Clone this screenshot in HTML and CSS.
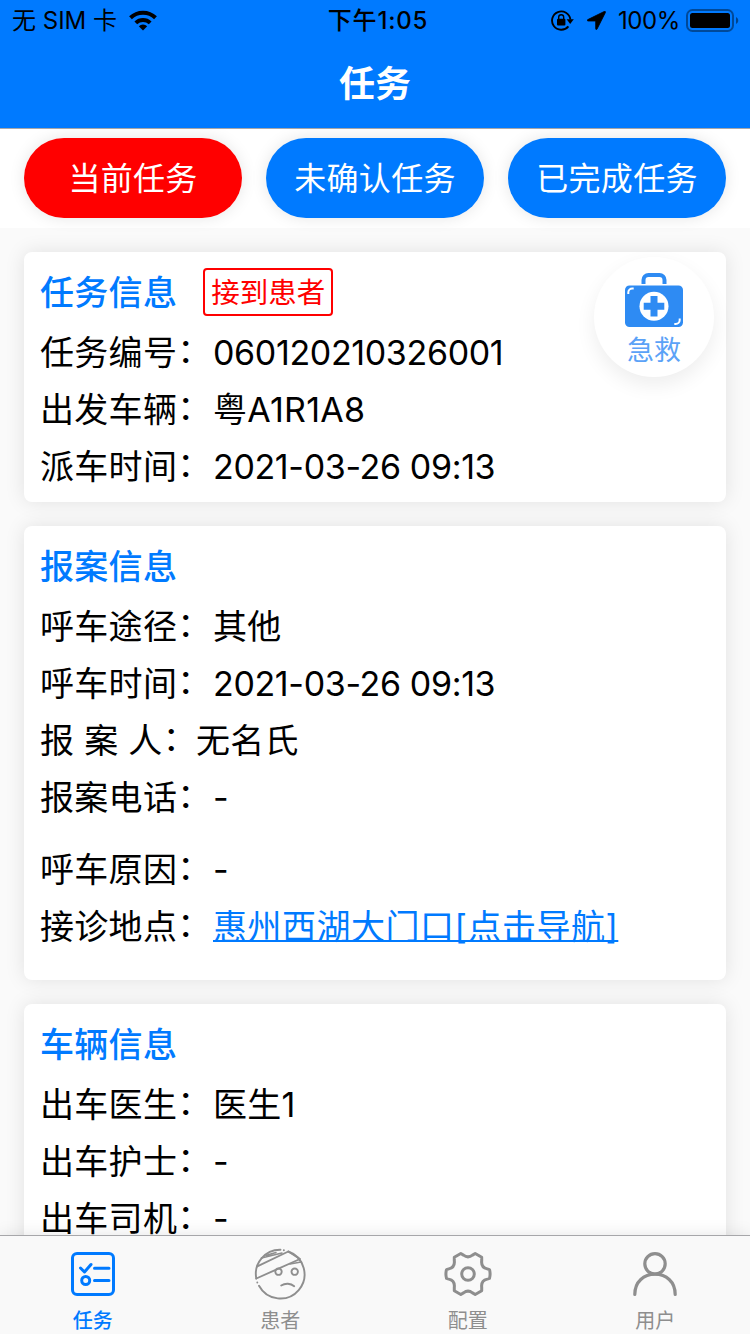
FILE: index.html
```html
<!DOCTYPE html>
<html lang="zh-CN">
<head>
    <meta charset="UTF-8">
    <meta name="viewport" content="width=device-width, initial-scale=1.0">
    <title>任务</title>
    <link rel="stylesheet" href="styles.css">
</head>
<body>

    <header class="header">
        <!-- 状态栏 -->
        <div class="status-bar">
            <div class="status-left">
                <span class="carrier">无 SIM 卡</span>
                <svg class="wifi" width="28" height="21" viewBox="0 0 28 21" fill="none" stroke="#000" stroke-width="4">
                    <path d="M1.5 7.8a18 18 0 0 1 25 0" />
                    <path d="M6.8 12.9a10.5 10.5 0 0 1 14.4 0" />
                    <path d="M14 20.5l-4.2-4.2a6 6 0 0 1 8.4 0z" fill="#000" stroke="none" />
                </svg>
            </div>
            <span class="time">下午1:05</span>
            <div class="status-right">
                <svg class="lock" width="23" height="21" viewBox="0 0 23 21">
                    <path d="M17.4 16.4A9.2 9.2 0 1 1 19.4 9.5" fill="none" stroke="#000" stroke-width="1.9" />
                    <path d="M15.6 9.3h7.2l-3.6 4.6z" />
                    <rect x="6" y="8.7" width="8.4" height="6.8" rx="1" />
                    <path d="M7.7 9V7.2a2.5 2.5 0 0 1 5 0V9" fill="none" stroke="#000" stroke-width="1.4" />
                </svg>
                <svg class="location" width="19" height="19" viewBox="0 0 19 19">
                    <path d="M17.2.5L.8 8.6c-1 .5-.7 1.4.3 1.4h7.6v7.7c0 1.1 1 1.2 1.4.3L18.4 1.5c.4-.9-.4-1.4-1.2-1z" stroke="#000" stroke-width=".8" />
                </svg>
                <span class="percent">100%</span>
                <svg class="battery" width="53" height="23" viewBox="0 0 53 23">
                    <rect x="1" y="1" width="46" height="21" rx="5.5" fill="none" stroke="#000" stroke-opacity=".4" stroke-width="2" />
                    <rect x="4" y="4" width="40" height="15" rx="2.5" />
                    <path d="M50 8c3 1.5 3 5.5 0 7z" fill-opacity=".45" />
                </svg>
            </div>
        </div>
        <h1>任务</h1>
    </header>

    <!-- 任务筛选 -->
    <div class="filters">
        <button class="filter active">当前任务</button>
        <button class="filter">未确认任务</button>
        <button class="filter">已完成任务</button>
    </div>

    <main class="content">
        <section class="card">
            <div class="card-title">
                <h2>任务信息</h2>
                <span class="tag">接到患者</span>
            </div>
            <p class="row"><span class="label">任务编号<span class="colon">：</span></span><span class="number">060120210326001</span></p>
            <p class="row"><span class="label">出发车辆<span class="colon">：</span></span><span>粤A1R1A8</span></p>
            <p class="row"><span class="label">派车时间<span class="colon">：</span></span><span class="number">2021-03-26 09:13</span></p>

            <!-- 急救按钮 -->
            <div class="aid">
                <svg width="58" height="54" viewBox="0 0 58 54">
                    <path d="M18.5 11V7a5 5 0 0 1 5-5h11a5 5 0 0 1 5 5v4" fill="none" stroke="#2e8bf3" stroke-width="4" />
                    <rect x="0" y="12.5" width="58" height="41.5" rx="4.5" fill="#2e8bf3" />
                    <circle cx="29" cy="33.3" r="14.5" fill="#fff" />
                    <path d="M29 23v20.6M18.7 33.3h20.6" stroke="#2e8bf3" stroke-width="7" />
                    <path d="M3.3 21v-1.5a4 4 0 0 1 4-4h1.4M54.7 45.5V47a4 4 0 0 1-4 4h-1.4" fill="none" stroke="#fff" stroke-width="2" />
                </svg>
                <span>急救</span>
            </div>
        </section>

        <section class="card">
            <div class="card-title">
                <h2>报案信息</h2>
            </div>
            <p class="row"><span class="label">呼车途径<span class="colon">：</span></span><span>其他</span></p>
            <p class="row"><span class="label">呼车时间<span class="colon">：</span></span><span class="number">2021-03-26 09:13</span></p>
            <p class="row"><span class="label short">报 案 人<span class="colon">：</span></span><span>无名氏</span></p>
            <p class="row phone"><span class="label">报案电话<span class="colon">：</span></span><span>-</span></p>
            <p class="row"><span class="label">呼车原因<span class="colon">：</span></span><span>-</span></p>
            <p class="row last"><span class="label">接诊地点<span class="colon">：</span></span><a class="link" href="#">惠州西湖大门口[点击导航]</a></p>
        </section>

        <section class="card">
            <div class="card-title">
                <h2>车辆信息</h2>
            </div>
            <p class="row"><span class="label">出车医生<span class="colon">：</span></span><span>医生1</span></p>
            <p class="row"><span class="label">出车护士<span class="colon">：</span></span><span>-</span></p>
            <p class="row"><span class="label">出车司机<span class="colon">：</span></span><span>-</span></p>
        </section>
    </main>

    <!-- 底部导航 -->
    <nav class="tabbar">
        <a class="tab active" href="#">
            <svg width="52" height="52" viewBox="0 0 52 52" stroke-width="3">
                <rect x="5.5" y="5.5" width="41" height="41" rx="4.5" />
                <path d="M13.5 20l4 4 6.5-7.5M27.5 20.2H42M27.5 32.5H42" />
                <circle cx="18.7" cy="32.5" r="4" />
            </svg>
            <span>任务</span>
        </a>
        <a class="tab" href="#">
            <svg width="52" height="52" viewBox="0 0 52 52" stroke-width="1.9">
                <path d="M2.3 30.5A24.2 24.2 0 0 1 26.5 1.7M34.3 3.5A24.2 24.2 0 1 1 5 37.8" />
                <path d="M3.3 18.3L34.3 3.5L46 11L2.3 30.5" />
                <path d="M7.5 10L28 5M12.5 7.3L22 4.5M36 16l11-2" stroke-width="1.5" />
                <path d="M3.3 34.5v.1M29.8 2.2h.1" />
                <circle cx="24.5" cy="23.7" r="3.2" />
                <circle cx="40.7" cy="23.7" r="3.2" />
                <path d="M27.2 37.5c4-2.500 9.500-2.300 13 .7" />
            </svg>
            <span>患者</span>
        </a>
        <a class="tab" href="#">
            <svg width="52" height="52" viewBox="0 0 52 52" stroke-width="3">
                <path d="M18.8 5.5l2.7 1.6q4.5 3.5 9 0l2.7-1.6 6.5 3.7v3.5q-.8 6.8 5.5 8.2l2.3.8q1.2 4.3 0 8.6l-2.3.8q-6.3 1.4-5.5 8.2v3.5l-6.5 3.7-2.7-1.6q-4.5-3.5-9 0l-2.7 1.6-6.5-3.7v-3.5q.8-6.8-5.5-8.2l-2.3-.8q-1.2-4.3 0-8.6l2.3-.8q6.3-1.4 5.5-8.2v-3.5z" />
                <circle cx="26" cy="26" r="6.3" />
            </svg>
            <span>配置</span>
        </a>
        <a class="tab" href="#">
            <svg width="52" height="52" viewBox="0 0 52 52" stroke-width="3.2">
                <circle cx="26" cy="15.8" r="10.2" />
                <path d="M5.8 46.5C5.8 33.5 15 26.2 26 26.2s20.2 7.3 20.2 20.3" />
            </svg>
            <span>用户</span>
        </a>
    </nav>

</body>
</html>
```

FILE: styles.css
```css
* {
    box-sizing: border-box;
}

body {
    margin: 0;
    height: 1334px;
    display: flex;
    flex-direction: column;
    overflow: hidden;
    font-family: Inter, "Noto Sans CJK SC", sans-serif;
    background-color: #fafafa;
    color: #000;
}

h1, h2, p {
    margin: 0;
}

.header {
    flex: none;
    height: 129px;
    background-color: #007aff;
    border-bottom: 1px solid #a7a7aa;
}

.status-bar {
    display: grid;
    grid-template-columns: 1fr auto 1fr;
    align-items: center;
    height: 41px;
    padding: 0 11px 0 12px;
    font-size: 24px;
    line-height: 42px;
}

.status-left, .status-right {
    display: flex;
    align-items: center;
}

.status-right {
    justify-content: flex-end;
}

.wifi {
    margin-left: 12px;
    margin-bottom: 2px;
}

.time {
    padding-left: 5px;
    font-weight: 500;
    letter-spacing: 0.8px;
}

.lock {
    margin-bottom: 2px;
}

.location {
    margin: 0 12px 1px 13px;
}

.percent {
    letter-spacing: -0.4px;
}

.battery {
    margin-left: 6px;
    margin-bottom: 1px;
}

.header h1 {
    color: #fff;
    font-size: 36px;
    font-weight: 600;
    line-height: 86px;
    text-align: center;
}

.filters {
    flex: none;
    display: flex;
    gap: 24px;
    height: 99px;
    padding: 9px 24px 10px;
    background-color: #fff;
}

.filter {
    flex: 1;
    padding: 0 0 4px;
    border: none;
    border-radius: 40px;
    background-color: #007aff;
    color: #fff;
    font-family: inherit;
    font-size: 32px;
    font-weight: 400;
    letter-spacing: 0.3px;
    box-shadow: 0 0 16px rgba(0, 0, 0, 0.1);
}

.filter.active {
    background-color: #f00;
}

.content {
    flex: 1;
    min-height: 0;
    overflow: hidden;
    padding: 24px;
}

.card {
    position: relative;
    margin-bottom: 24px;
    padding: 16px 16px 7px;
    border-radius: 8px;
    background-color: #fff;
    box-shadow: 0 0 20px rgba(0, 0, 0, 0.1);
}

.card-title {
    display: flex;
    align-items: center;
    height: 48px;
    margin-bottom: 8px;
}

.card-title h2 {
    padding-top: 2px;
    color: #007aff;
    font-size: 34px;
    font-weight: 500;
    line-height: 48px;
    letter-spacing: 0.3px;
}

.tag {
    height: 48px;
    margin-left: 26px;
    padding: 0 6px;
    border: 2px solid #f00;
    border-radius: 4px;
    color: #f00;
    font-size: 28.5px;
    line-height: 45px;
}

.row {
    display: flex;
    height: 57px;
    font-size: 34px;
    line-height: 58px;
    letter-spacing: 0.3px;
    white-space: nowrap;
}

.label {
    width: 173px;
}

.label.short {
    width: 156px;
}

.colon {
    line-height: 1;
    vertical-align: 2px;
}

.number {
    letter-spacing: -0.35px;
}

.row.phone {
    margin-bottom: 15px;
}

.row.last {
    margin-bottom: 18px;
}

.link {
    color: #007aff;
    letter-spacing: 0.5px;
    text-decoration: underline;
    text-decoration-thickness: 2px;
    text-decoration-skip-ink: none;
}

.aid {
    position: absolute;
    top: 5px;
    right: 12px;
    width: 120px;
    height: 120px;
    display: flex;
    flex-direction: column;
    align-items: center;
    padding-top: 16px;
    border-radius: 50%;
    background-color: #fff;
    color: #5ba2f7;
    font-size: 27px;
    line-height: 47px;
    box-shadow: 0 8px 20px rgba(0, 0, 0, 0.07);
}

.tabbar {
    position: relative;
    flex: none;
    display: flex;
    height: 99px;
    border-top: 1px solid #a7a7aa;
    background-color: #f9f9f9;
    box-shadow: 0 0 16px rgba(0, 0, 0, 0.1);
}

.tab {
    flex: 1;
    display: flex;
    flex-direction: column;
    align-items: center;
    gap: 7px;
    padding: 12px 2px 0 0;
    color: #8e8e8e;
    font-size: 20px;
    line-height: 28px;
    text-decoration: none;
}

.tab.active {
    color: #007aff;
    font-weight: 500;
}

.tab svg {
    flex: none;
    fill: none;
    stroke: currentColor;
    stroke-linecap: round;
    stroke-linejoin: round;
}
```
